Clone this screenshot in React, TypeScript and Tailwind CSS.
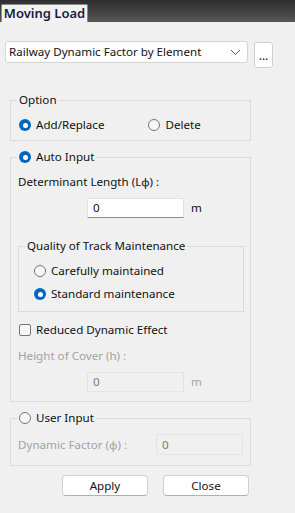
import type { ReactNode } from "react";

const font = { fontFamily: '"Noto Sans", "Open Sans", sans-serif' };

function Radio({ checked }: { checked?: boolean }) {
  return checked ? (
    <span className="flex h-[12px] w-[12px] shrink-0 items-center justify-center rounded-full bg-[#0067c0]">
      <span className="h-[5px] w-[5px] rounded-full bg-white" />
    </span>
  ) : (
    <span className="h-[12px] w-[12px] shrink-0 rounded-full border border-[#767676] bg-[#f7f7f7]" />
  );
}

function RadioItem({ label, checked }: { label: string; checked?: boolean }) {
  return (
    <span className="flex h-[16px] items-center gap-[5px] text-[11.6px] leading-[16px] text-[#111]">
      <Radio checked={checked} />
      {label}
    </span>
  );
}

function Group({
  legend,
  className,
  legendClass,
  children,
}: {
  legend: ReactNode;
  className?: string;
  legendClass?: string;
  children: ReactNode;
}) {
  return (
    <fieldset className={`border border-[#dadada] ${className ?? ""}`}>
      <legend className={`px-[2px] text-[11.6px] leading-[16px] text-[#111] ${legendClass ?? "ml-[6px]"}`}>
        {legend}
      </legend>
      {children}
    </fieldset>
  );
}

function TextBox({ value, disabled, className }: { value: string; disabled?: boolean; className?: string }) {
  return disabled ? (
    <div
      className={`flex h-[20px] items-center border border-[#e4e4e4] bg-[#f0f0f0] px-[5px] text-[11.6px] text-[#7a7a7a] ${className ?? ""}`}
    >
      {value}
    </div>
  ) : (
    <div
      className={`flex h-[20px] items-center rounded-t-[2px] border border-b-[#8a8a8a] border-[#e2e2e2] bg-white px-[5px] text-[11.6px] text-[#111] ${className ?? ""}`}
    >
      {value}
    </div>
  );
}

export default function App() {
  return (
    <div className="flex h-[513px] w-[295px] flex-col bg-[#f0f0f0]" style={font}>
      <div className="flex h-[22px] items-end bg-gradient-to-b from-[#2e2e2e] to-[#565656] pl-[1px]">
        <div className="flex h-[18px] w-[87px] items-center justify-center rounded-t-[2px] border border-b-0 border-[#8c8c8c] bg-[#f2f2f2] text-[13px] font-semibold text-[#1a1a40]">
          Moving Load
        </div>
      </div>

      <div className="mt-[19px] flex h-[27px] items-start px-[5px]">
        <div className="flex h-[22px] w-[243px] items-center justify-between rounded-[3px] border border-[#d4d4d4] bg-white pl-[3px] pr-[6px] text-[11.6px] text-[#111]">
          Railway Dynamic Factor by Element
          <svg width="11" height="7" viewBox="0 0 11 7" fill="none" stroke="#555" strokeWidth="1">
            <path d="M1 1l4.5 4.5L10 1" />
          </svg>
        </div>
        <div className="ml-[6px] mt-[1px] flex h-[26px] w-[19px] items-end justify-center rounded-[3px] border border-[#d0d0d0] bg-white pb-[5px] text-[12px] leading-[12px] text-[#222]">
          ...
        </div>
      </div>

      <Group legend="Option" className="ml-[10px] mt-[24px] w-[241px] pb-[7px]">
        <div className="mt-[9px] flex pl-[8px]">
          <RadioItem label="Add/Replace" checked />
          <span className="ml-[44px]">
            <RadioItem label="Delete" />
          </span>
        </div>
      </Group>

      <Group
        legend={<RadioItem label="Auto Input" checked />}
        className="ml-[10px] mt-[8px] w-[241px] pb-[9px] pl-[7px]"
        legendClass="ml-[-1px]"
      >
        <div className="mt-[9px] text-[11.6px] leading-[16px] text-[#111]">Determinant Length (Lφ) :</div>
        <div className="mt-[8px] flex items-center">
          <TextBox value="0" className="ml-[69px] w-[97px]" />
          <span className="ml-[7px] text-[11.6px] text-[#111]">m</span>
        </div>

        <Group legend="Quality of Track Maintenance" className="mt-[20px] w-[226px] pb-[9px] pl-[15px]" legendClass="ml-[-9px]">
          <div className="mt-[9px]">
            <RadioItem label="Carefully maintained" />
          </div>
          <div className="mt-[7px]">
            <RadioItem label="Standard maintenance" checked />
          </div>
        </Group>

        <div className="mt-[10px] flex h-[16px] items-center gap-[5px] pl-[1px] text-[11.6px] text-[#111]">
          <span className="h-[12px] w-[12px] rounded-[2px] border border-[#767676] bg-[#f7f7f7]" />
          Reduced Dynamic Effect
        </div>
        <div className="mt-[10px] text-[11.6px] leading-[16px] text-[#a3a3a3]">Height of Cover (h) :</div>
        <div className="mt-[8px] flex items-center">
          <TextBox value="0" disabled className="ml-[69px] w-[97px]" />
          <span className="ml-[7px] text-[11.6px] text-[#a3a3a3]">m</span>
        </div>
      </Group>

      <Group
        legend={<RadioItem label="User Input" />}
        className="ml-[10px] mt-[8px] w-[241px] pb-[10px] pl-[7px]"
        legendClass="ml-[-1px]"
      >
        <div className="mt-[8px] flex items-center">
          <span className="w-[138px] text-[11.6px] text-[#a3a3a3]">Dynamic Factor (φ) :</span>
          <TextBox value="0" disabled className="h-[21px] w-[87px]" />
        </div>
      </Group>

      <div className="mt-[9px] flex gap-[15px] pl-[62px]">
        <button className="h-[21px] w-[86px] rounded-[4px] border border-[#d0d0d0] border-b-[#b0b0b0] bg-white text-[11.6px] text-[#111]">
          Apply
        </button>
        <button className="h-[21px] w-[86px] rounded-[4px] border border-[#d0d0d0] border-b-[#b0b0b0] bg-white text-[11.6px] text-[#111]">
          Close
        </button>
      </div>
    </div>
  );
}
